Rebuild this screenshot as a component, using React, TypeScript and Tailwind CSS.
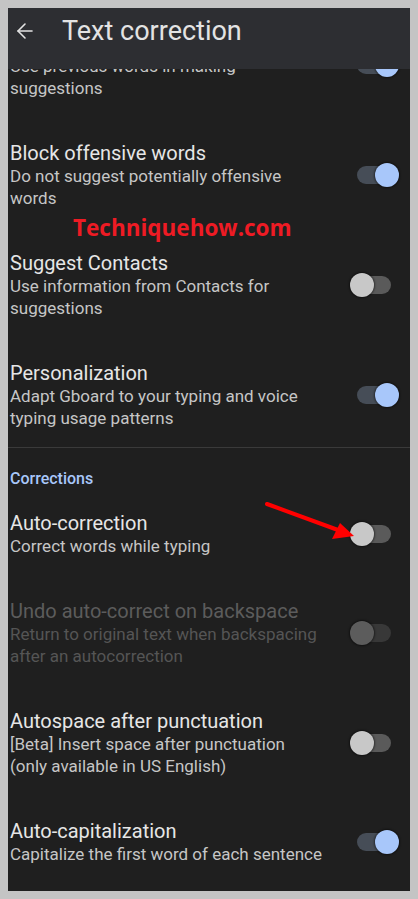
import { ArrowLeft } from 'lucide-react';
import clsx from 'clsx';

type ToggleState = 'on' | 'off' | 'disabled';

interface Setting {
  title: string;
  lines: string[];
  toggle: ToggleState;
}

const topSettings: Setting[] = [
  {
    title: 'Block offensive words',
    lines: ['Do not suggest potentially offensive', 'words'],
    toggle: 'on',
  },
  {
    title: 'Suggest Contacts',
    lines: ['Use information from Contacts for', 'suggestions'],
    toggle: 'off',
  },
  {
    title: 'Personalization',
    lines: ['Adapt Gboard to your typing and voice', 'typing usage patterns'],
    toggle: 'on',
  },
];

const corrections: Setting[] = [
  {
    title: 'Auto-correction',
    lines: ['Correct words while typing'],
    toggle: 'off',
  },
  {
    title: 'Undo auto-correct on backspace',
    lines: ['Return to original text when backspacing', 'after an autocorrection'],
    toggle: 'disabled',
  },
  {
    title: 'Autospace after punctuation',
    lines: ['[Beta] Insert space after punctuation', '(only available in US English)'],
    toggle: 'off',
  },
  {
    title: 'Auto-capitalization',
    lines: ['Capitalize the first word of each sentence'],
    toggle: 'on',
  },
];

const Toggle = ({ state }: { state: ToggleState }) => (
  <div className="relative h-6 w-[52px] shrink-0">
    <div
      className={clsx(
        'absolute left-[9px] top-[3px] h-[18px] w-[34px] rounded-full',
        state === 'on' ? 'bg-[#464d57]' : state === 'off' ? 'bg-[#5a5a5a]' : 'bg-[#383838]'
      )}
    />
    <div
      className={clsx(
        'absolute top-0 h-6 w-6 rounded-full shadow-[0_0_2px_1px_rgba(0,0,0,0.45)]',
        state === 'on' ? 'left-[27px] bg-[#a8c7fa]' : 'left-[2px]',
        state === 'off' && 'bg-[#c8c8c8]',
        state === 'disabled' && 'bg-[#5c5c5c]'
      )}
    />
  </div>
);

const SettingRow = ({ item }: { item: Setting }) => {
  const disabled = item.toggle === 'disabled';
  return (
    <div className="flex items-center justify-between py-[21px] pl-[2px] pr-[10px]">
      <div className="whitespace-nowrap">
        <p className={clsx('text-[20px] leading-6', disabled ? 'text-[#5c5c5c]' : 'text-[#e6e6e6]')}>
          {item.title}
        </p>
        {item.lines.map((line) => (
          <p
            key={line}
            className={clsx('text-[17px] leading-[22px]', disabled ? 'text-[#555555]' : 'text-[#c6c6c6]')}
          >
            {line}
          </p>
        ))}
      </div>
      <Toggle state={item.toggle} />
    </div>
  );
};

export default function App() {
  return (
    <div
      className="h-[899px] w-[418px] bg-[#c4c4c4] px-2 pt-2"
      style={{ fontFamily: 'Roboto, "Open Sans", sans-serif' }}
    >
      <div className="relative h-[883px] overflow-hidden bg-[#1f1f1f]">
        <header className="relative z-10 flex h-[61px] items-center bg-[#2d2e32] pb-[15px] text-[#e3e3e3]">
          <ArrowLeft className="ml-[5px] h-6 w-6" strokeWidth={1.6} />
          <h1 className="ml-[25px] text-[27px] leading-none">Text correction</h1>
        </header>

        {/* first row scrolled under the app bar */}
        <div className="flex h-[51px] flex-col justify-end overflow-hidden">
          <SettingRow
            item={{
              title: 'Next-word suggestions',
              lines: ['Use previous words in making', 'suggestions'],
              toggle: 'on',
            }}
          />
        </div>

        {topSettings.map((item) => (
          <SettingRow key={item.title} item={item} />
        ))}

        <div className="mt-[-3px] h-px bg-[#3a3a3a]" />

        <p className="pl-[2px] pt-5 text-[16px] font-medium leading-[22px] text-[#a8c7fa]">Corrections</p>

        {corrections.map((item) => (
          <SettingRow key={item.title} item={item} />
        ))}

        {/* watermark */}
        <p
          className="absolute left-[65px] top-[203px] text-[22.5px] font-bold text-[#ee1b24]"
          style={{ fontFamily: '"Open Sans", sans-serif' }}
        >
          Techniquehow.com
        </p>

        {/* annotation arrow */}
        <svg className="absolute left-[250px] top-[486px]" width="100" height="50" viewBox="0 0 100 50">
          <line x1="9" y1="10" x2="80" y2="36" stroke="#ff0000" strokeWidth="4" strokeLinecap="round" />
          <polygon points="96,42 74,45 82,29" fill="#ff0000" />
        </svg>
      </div>
    </div>
  );
}
